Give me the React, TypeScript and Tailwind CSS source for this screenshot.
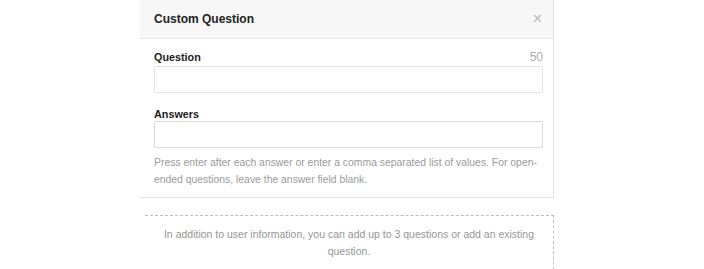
import React from "react";

export default function App() {
  return (
    <div className="w-[704px] h-[269px] bg-white overflow-hidden" style={{ fontFamily: '"Liberation Sans", Arial, sans-serif' }}>
      <div className="ml-[140px] w-[414px]">
        {/* Card */}
        <div className="border-r border-b border-[#e3e3e3] bg-white">
          <div className="h-[39px] bg-[#f7f7f7] border-b border-[#e6e6e6] flex items-center justify-between pl-[14px] pr-[11px]">
            <h2 className="text-[12px] font-bold text-[#222]">Custom Question</h2>
            <span className="text-[#b5b5b5] text-[16px] leading-none">×</span>
          </div>
          <div className="pl-[14px] pr-[10px] pt-[11px] pb-[9px]">
            <div className="flex items-end justify-between">
              <label className="text-[10.8px] font-bold text-[#222] leading-[14px]">Question</label>
              <span className="text-[12px] text-[#aaa] leading-[14px]">50</span>
            </div>
            <input className="mt-[2px] block w-full h-[27px] border border-[#e4e4e4] rounded-[2px] outline-none" />
            <label className="block mt-[14px] text-[10.8px] font-bold text-[#222] leading-[14px]">Answers</label>
            <input className="block w-full h-[27px] border border-[#d9d9d9] rounded-[2px] outline-none" />
            <p className="mt-[6px] text-[10.4px] leading-[17px] text-[#9a9a9a]">
              Press enter after each answer or enter a comma separated list of values. For open-ended questions, leave the answer field blank.
            </p>
          </div>
        </div>

        {/* Dashed add box */}
        <div className="mt-[17px] ml-[5px] w-[409px] h-[60px] border-t border-r border-dashed border-[#bdbdbd] pt-[10px] px-[10px]">
          <p className="text-center text-[10.5px] leading-[17px] text-[#959595]">
            In addition to user information, you can add up to 3 questions or add an existing question.
          </p>
        </div>
      </div>
    </div>
  );
}
